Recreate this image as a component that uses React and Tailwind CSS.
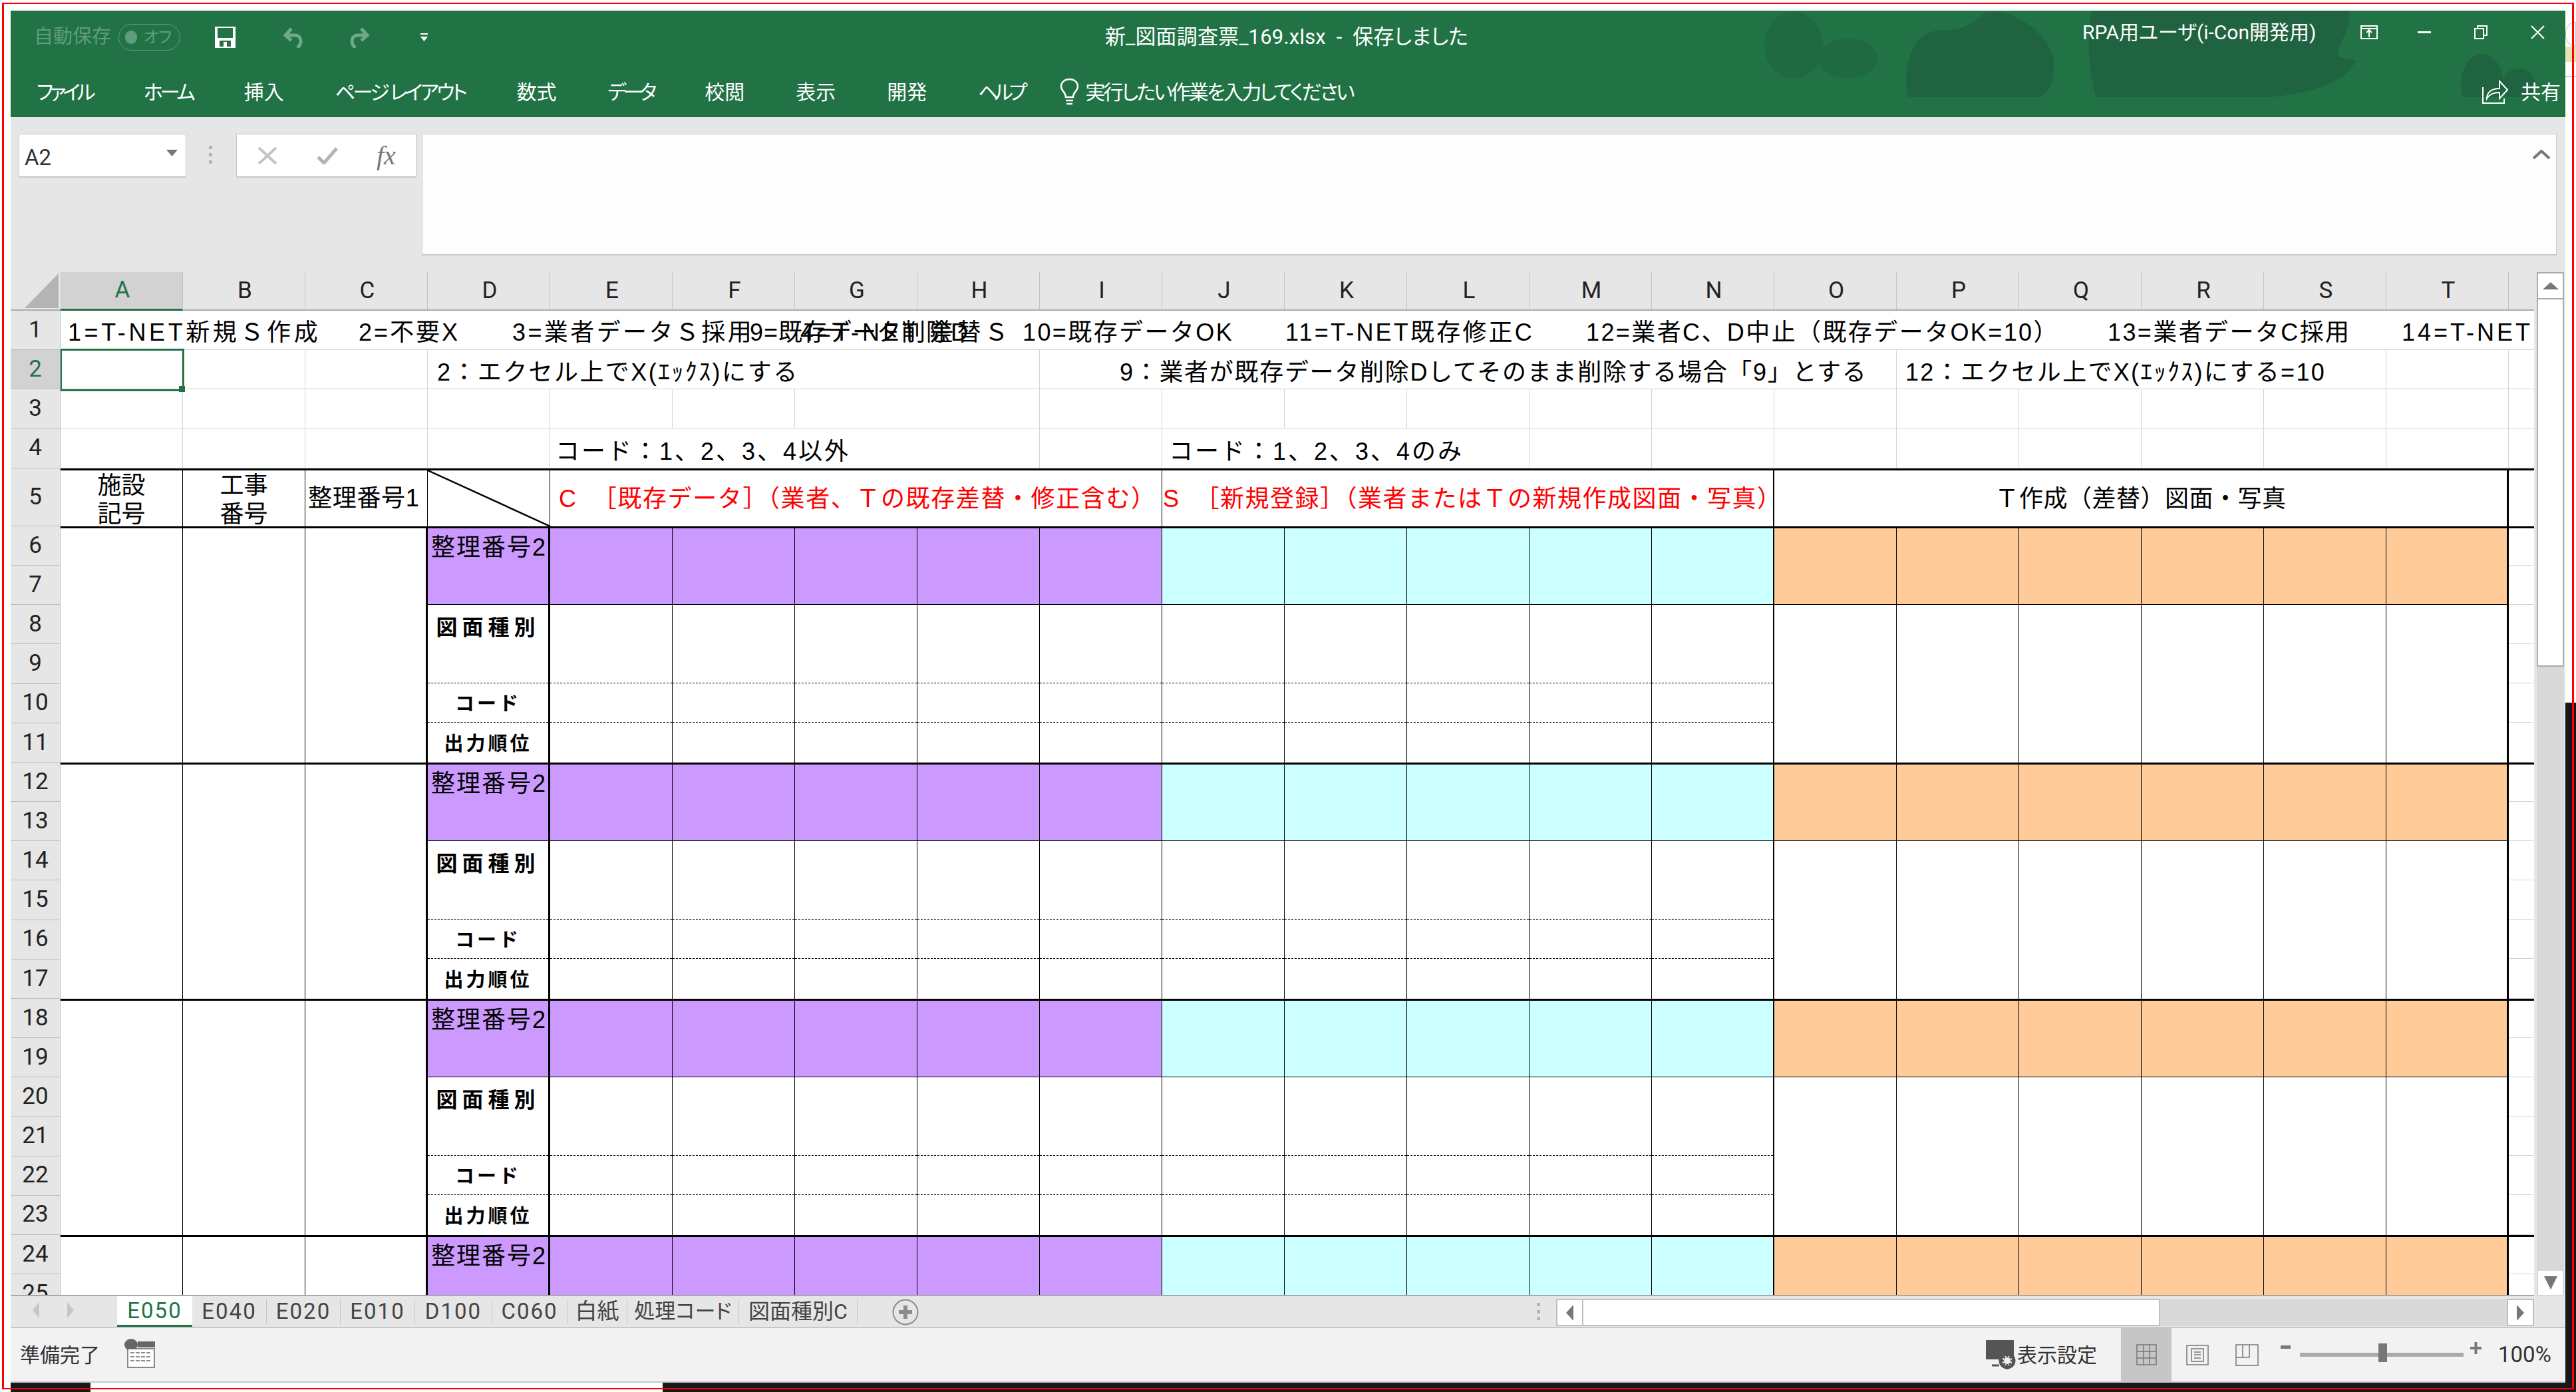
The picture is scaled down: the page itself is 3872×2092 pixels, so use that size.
import React from "react";

const COLS = "ABCDEFGHIJKLMNOPQRST".split("");
const UI_FONT = "[font-family:Roboto,'Noto_Sans_CJK_JP',sans-serif] [font-feature-settings:'palt']";
const CELL_FONT = "[font-family:'Liberation_Sans','Noto_Sans_CJK_JP',sans-serif] [font-feature-settings:normal]";

const SPAN = {
  1: "col-span-1",
  2: "col-span-2",
  3: "col-span-3",
  4: "col-span-4",
  5: "col-span-5",
  6: "col-span-6",
  7: "col-span-7",
};

const GRID_ROW = "grid grid-cols-[repeat(20,184px)_37px] border-b border-[#d4d4d4]";

// [span, text, padding, vertical line]
const ROW_1 = [
  [2, "1=T-NET新規Ｓ作成", "pl-[11px] tracking-[4.6px]"],
  [1, "2=不要X", "pl-[80px] tracking-[3px]"],
  [2, "3=業者データＳ採用", "pl-[127px] tracking-[3.4px]"],
  [1, "9=既存データ削除D", "pl-[116px] tracking-[1px]"],
  [1, "4=T-NET 差替Ｓ", "pl-[8px] tracking-[5px]"],
  [2, "10=既存データOK", "pl-[158px] tracking-[2.4px]"],
  [1, "", ""],
  [2, "11=T-NET既存修正C", "pl-[1px] tracking-[3.2px]"],
  [4, "12=業者C、D中止（既存データOK=10）", "pl-[85px] tracking-[2.4px]"],
  [3, "13=業者データC採用", "pl-[133px] tracking-[2.4px]"],
  [1, "14=T-NET", "pl-[23px] tracking-[4px]"],
  [1, "", ""],
];
const ROW_2 = [
  [1, "", "", true],
  [1, "", "", true],
  [1, "", "", true],
  [5, "2：エクセル上でX(ｴｯｸｽ)にする", "pl-[14px] tracking-[2.4px]", true],
  [7, "9：業者が既存データ削除Dしてそのまま削除する場合「9」とする", "pl-[120px] tracking-[1.7px]", true],
  [4, "12：エクセル上でX(ｴｯｸｽ)にする=10", "pl-[13px] tracking-[2.3px]", true],
  [1, "", "", true],
  [1, "", ""],
];
const ROW_3 = [
  ...Array.from({ length: 6 }, () => [1, "", "", true]),
  [2, "", "", true],
  ...Array.from({ length: 12 }, () => [1, "", "", true]),
  [1, "", ""],
];
const ROW_4 = [
  ...Array.from({ length: 4 }, () => [1, "", "", true]),
  [4, "コード：1、2、3、4以外", "pl-[8px] tracking-[3px]", true],
  [1, "", "", true],
  [3, "コード：1、2、3、4のみ", "pl-[10px] tracking-[3px]", true],
  ...Array.from({ length: 8 }, () => [1, "", "", true]),
  [1, "", ""],
];

const TABS = [
  ["E040", "w-[112px] text-[33px] tracking-[2px]"],
  ["E020", "w-[111px] text-[33px] tracking-[2px]"],
  ["E010", "w-[112px] text-[33px] tracking-[2px]"],
  ["D100", "w-[116px] text-[33px] tracking-[2px]"],
  ["C060", "w-[113px] text-[33px] tracking-[2px]"],
  ["白紙", "w-[90px] text-[33px]"],
  ["処理コード", "w-[168px] text-[31px]"],
  ["図面種別C", "w-[178px] text-[32px]"],
];

const RIBBON_TABS = [
  ["ファイル", "tracking-[-5px]"],
  ["ホーム", "tracking-[-4px]"],
  ["挿入", "tracking-normal"],
  ["ページ レイアウト", "tracking-[-3.5px]"],
  ["数式", "tracking-normal"],
  ["データ", "tracking-[-5px]"],
  ["校閲", "tracking-normal"],
  ["表示", "tracking-normal"],
  ["開発", "tracking-normal"],
  ["ヘルプ", "tracking-[-6px]"],
];

function TextRow({ cells, height, pad }) {
  return (
    <div className={`${GRID_ROW} ${height}`}>
      {cells.map((c, i) => (
        <div
          key={i}
          className={`${SPAN[c[0]]} ${c[3] ? "border-r border-[#d4d4d4]" : ""} flex items-end whitespace-nowrap text-[36px] leading-[44px] text-black ${pad} ${CELL_FONT} ${c[2]}`}
        >
          {c[1]}
        </div>
      ))}
    </div>
  );
}

function Ribbon() {
  return (
    <div className={`relative h-[160px] bg-[#217346] ${UI_FONT}`}>
      {/* title bar background art */}
      <svg className="absolute left-0 top-0 pointer-events-none" width="3840" height="130" viewBox="0 0 3840 130">
        <ellipse cx="2680" cy="52" rx="44" ry="50" fill="#1f6a42" />
        <ellipse cx="2762" cy="72" rx="44" ry="30" fill="#1f6a42" />
        <path d="M2852 130C2845 100 2850 30 2900 30C2925 30 2945 25 2965 5C3000 -10 3060 30 3070 70C3075 110 3060 125 3050 130Z" fill="#1f6340" />
        <path d="M3127 0H3515C3520 30 3490 60 3500 70L3525 75C3510 110 3450 125 3395 130H3135C3125 100 3120 60 3127 0Z" fill="#1f6340" />
        <ellipse cx="3715" cy="110" rx="32" ry="45" fill="#1f6340" />
        <ellipse cx="3770" cy="112" rx="25" ry="25" fill="#1f6340" />
      </svg>
      <div className="relative flex h-[80px] items-center pl-[35px]">
        <span className="w-[119px] text-[29px] text-[#5f9d7e]">自動保存</span>
        <span className="ml-[8px] flex h-[40px] w-[93px] items-center gap-[10px] rounded-full border border-[#5f9d7e] pl-[9px] text-[24px] text-[#5f9d7e]">
          <span className="h-[20px] w-[18px] rounded-full bg-[#5f9d7e]" />
          オフ
        </span>
        <svg className="ml-[52px]" width="31" height="32" viewBox="0 0 31 32">
          <path d="M0 0H31V32H0Z M4 2V17H27V2Z M7 21V30H24V21Z" fill="#fff" fillRule="evenodd" />
          <rect x="13" y="23" width="5" height="7" fill="#fff" />
        </svg>
        <svg className="ml-[71px]" width="32" height="32" viewBox="0 0 32 32" fill="none" stroke="#6fa88b" strokeWidth="5">
          <path d="M5 13H18C25 13 27 18 27 22C27 26 25 29 22 32" />
          <path d="M13 3L4 13L13 21" />
        </svg>
        <svg className="ml-[67px]" width="32" height="32" viewBox="0 0 32 32" fill="none" stroke="#6fa88b" strokeWidth="5">
          <path d="M27 13H14C7 13 5 18 5 22C5 26 7 29 10 32" />
          <path d="M19 3L28 13L19 21" />
        </svg>
        <svg className="ml-[75px]" width="13" height="12" viewBox="0 0 13 12">
          <rect x="1" y="0" width="11" height="2" fill="#fff" />
          <path d="M1 5H12L6.5 12Z" fill="#fff" />
        </svg>
        <span className="ml-[1017px] whitespace-pre text-[31px] tracking-[0.2px] text-white">新_図面調査票_169.xlsx  -  保存しました</span>
        <span className="ml-[923px] -mt-[16px] whitespace-nowrap text-[30px] text-white">RPA用ユーザ(i-Con開発用)</span>
        <svg className="ml-[67px] -mt-[16px]" width="26" height="21" viewBox="0 0 26 21" fill="none" stroke="#fff" strokeWidth="2">
          <rect x="1" y="1" width="24" height="19" />
          <path d="M1 5H25 M13 18V8 M9 11L13 7L17 11" />
        </svg>
        <div className="ml-[60px] -mt-[16px] h-[3px] w-[20px] bg-white" />
        <svg className="ml-[65px] -mt-[16px]" width="20" height="21" viewBox="0 0 20 21" fill="none" stroke="#fff" strokeWidth="2">
          <rect x="1" y="5" width="13" height="15" />
          <path d="M5 5V1H19V15H14" />
        </svg>
        <svg className="ml-[65px] -mt-[16px]" width="21" height="21" viewBox="0 0 21 21" stroke="#fff" strokeWidth="2">
          <path d="M1 1L20 20 M20 1L1 20" />
        </svg>
      </div>
      <div className="relative flex h-[80px] items-center pl-[39px] pr-[7px] pt-[4px]">
        <div className="flex gap-[77px] text-[30px] text-white">
          {RIBBON_TABS.map(([t, track]) => (
            <span key={t} className={`whitespace-nowrap ${track}`}>
              {t}
            </span>
          ))}
        </div>
        <svg className="ml-[55px] shrink-0" width="29" height="40" viewBox="0 0 29 40" fill="none" stroke="#fff" strokeWidth="2.5">
          <path d="M9 28C9 20 2 19 2 12C2 5 8 1 14.5 1C21 1 27 5 27 12C27 19 20 20 20 28Z" />
          <path d="M9 33H20 M10 38H19" />
        </svg>
        <span className="ml-[9px] whitespace-nowrap text-[30px] tracking-[-2.8px] text-white">実行したい作業を入力してください</span>
        <svg className="ml-auto shrink-0" width="39" height="36" viewBox="0 0 39 36" fill="none" stroke="#fff" strokeWidth="2">
          <path d="M1 11V35H33V28" />
          <path d="M7 28C7 18 15 13 26 13V2L38 15L26 28V19C18 19 11 21 7 28Z" />
        </svg>
        <span className="ml-[19px] shrink-0 whitespace-nowrap text-[30px] text-white">共有</span>
      </div>
    </div>
  );
}

function FormulaBar() {
  return (
    <div className={`flex h-[233px] items-start bg-[#e6e6e6] pl-[12px] pt-[25px] ${UI_FONT}`}>
      <div className="flex h-[66px] w-[252px] items-center justify-between border-b-2 border-l border-r border-t border-[#c8c8c8] bg-white pl-[8px] pr-[12px]">
        <span className="mt-[6px] text-[33px] text-[#333]">A2</span>
        <svg className="-mt-[8px]" width="17" height="10" viewBox="0 0 17 10">
          <path d="M0 0H17L8.5 10Z" fill="#777" />
        </svg>
      </div>
      <div className="ml-[34px] mt-[18px] flex h-[27px] w-[5px] flex-col justify-between">
        <span className="h-[5px] bg-[#b4b4b4]" />
        <span className="h-[5px] bg-[#b4b4b4]" />
        <span className="h-[5px] bg-[#b4b4b4]" />
      </div>
      <div className="ml-[36px] flex h-[66px] w-[271px] items-center border-b-2 border-l border-r border-t border-[#c8c8c8] bg-white pl-[31px]">
        <svg width="30" height="26" viewBox="0 0 30 26" stroke="#c4c4c4" strokeWidth="4">
          <path d="M2 1L28 25 M28 1L2 25" />
        </svg>
        <svg className="ml-[59px]" width="32" height="26" viewBox="0 0 32 26" fill="none" stroke="#b4b4b4" strokeWidth="5">
          <path d="M2 15L11 24L30 2" />
        </svg>
        <span className="ml-[58px] text-[40px] italic leading-none text-[#777] [font-family:'Liberation_Serif',serif]">fx</span>
      </div>
      <div className="relative ml-[8px] h-[183px] w-[3209px] border-b-2 border-l border-r border-t border-[#c8c8c8] bg-[#fdfdfd]">
        <svg className="absolute right-[9px] top-[23px]" width="26" height="14" viewBox="0 0 26 14" fill="none" stroke="#777" strokeWidth="4">
          <path d="M1 13L13 2L25 13" />
        </svg>
      </div>
    </div>
  );
}

function Section() {
  const solid = "border-b border-black";
  const dashed = "border-b border-dashed border-black";
  const label = "flex justify-center font-bold text-black";
  return (
    <div className={`flex h-[355px] shrink-0 border-t-[3px] border-black ${CELL_FONT}`}>
      <div className="w-[184px] border-r border-black" />
      <div className="w-[184px] border-r border-black" />
      <div className="w-[184px] border-r-[3px] border-black" />
      <div className="flex w-[184px] flex-col border-r-[3px] border-black">
        <div className={`h-[115px] bg-[#cc99ff] pl-[5px] pt-[9px] text-[36px] leading-[40px] tracking-[2px] whitespace-nowrap ${solid}`}>整理番号2</div>
        <div className={`${label} h-[118px] pt-[12px] text-[32px] leading-[44px] tracking-[7px] ${dashed}`}>図面種別</div>
        <div className={`${label} h-[59px] pt-[11px] text-[29px] leading-[40px] tracking-[4px] ${dashed}`}>コード</div>
        <div className={`${label} h-[60px] pt-[12px] text-[29px] leading-[40px] tracking-[4px]`}>出力順位</div>
      </div>
      {["E", "F", "G", "H", "I"].map((c) => (
        <div key={c} className="flex w-[184px] flex-col border-r border-black">
          <div className={`h-[115px] bg-[#cc99ff] ${solid}`} />
          <div className={`h-[118px] ${dashed}`} />
          <div className={`h-[59px] ${dashed}`} />
          <div className="h-[60px]" />
        </div>
      ))}
      {["J", "K", "L", "M", "N"].map((c) => (
        <div key={c} className={`flex w-[184px] flex-col border-black ${c === "N" ? "border-r-2" : "border-r"}`}>
          <div className={`h-[115px] bg-[#ccffff] ${solid}`} />
          <div className={`h-[118px] ${dashed}`} />
          <div className={`h-[59px] ${dashed}`} />
          <div className="h-[60px]" />
        </div>
      ))}
      {["O", "P", "Q", "R", "S", "T"].map((c) => (
        <div key={c} className={`flex w-[184px] flex-col border-black ${c === "T" ? "border-r-[3px]" : "border-r"}`}>
          <div className={`h-[115px] bg-[#ffcc99] ${solid}`} />
        </div>
      ))}
      <div className="flex w-[37px] flex-col">
        <div className="h-[56px] border-b border-[#d4d4d4]" />
        <div className="h-[59px] border-b border-[#d4d4d4]" />
        <div className="h-[59px] border-b border-[#d4d4d4]" />
        <div className="h-[59px] border-b border-[#d4d4d4]" />
        <div className="h-[59px] border-b border-[#d4d4d4]" />
        <div className="h-[60px] border-b border-[#d4d4d4]" />
      </div>
    </div>
  );
}

function Sheet() {
  const rowHead = "flex items-center justify-center border-b border-r border-[#bdbdbd] text-[35px] text-[#222]";
  const tall = Array.from({ length: 20 }, (_, i) => i + 6);
  return (
    <div className={`flex h-[1539px] bg-[#e6e6e6] ${UI_FONT}`}>
      <div className="relative flex h-full w-[3793px] flex-col overflow-hidden border-b-2 border-[#a8a8a8]">
        {/* column letters */}
        <div className="flex h-[58px] shrink-0 border-b-2 border-[#ababab]">
          <div className="flex w-[75px] items-end justify-end pb-[2px] pr-[2px]">
            <svg width="52" height="52" viewBox="0 0 52 52">
              <path d="M51 0V52H0Z" fill="#b4b4b4" />
            </svg>
          </div>
          {COLS.map((c) => (
            <div
              key={c}
              className={`flex w-[184px] items-center justify-center border-r border-[#c4c4c4] pl-[3px] text-[35px] ${c === "A" ? "-mb-[2px] border-b-[3px] border-b-[#217346] bg-[#d2d2d2] text-[#217346]" : "text-[#222]"}`}
            >
              {c}
            </div>
          ))}
        </div>
        <div className="relative flex min-h-0 flex-1">
          {/* row numbers */}
          <div className="flex w-[75px] shrink-0 flex-col">
            <div className={`${rowHead} h-[59px] shrink-0`}>1</div>
            <div className={`${rowHead} h-[59px] shrink-0 bg-[#d2d2d2] text-[#217346]`}>2</div>
            <div className={`${rowHead} h-[59px] shrink-0`}>3</div>
            <div className={`${rowHead} h-[60px] shrink-0`}>4</div>
            <div className={`${rowHead} h-[87px] shrink-0`}>5</div>
            {tall.map((n) => (
              <div key={n} className={`${rowHead} h-[59.17px] shrink-0`}>
                {n}
              </div>
            ))}
          </div>
          {/* cells */}
          <div className="relative flex-1 overflow-hidden bg-white">
            <TextRow cells={ROW_1} height="h-[59px]" pad="pb-[3px]" />
            <TextRow cells={ROW_2} height="h-[59px]" pad="pb-[2px]" />
            <TextRow cells={ROW_3} height="h-[59px]" pad="pb-[3px]" />
            <TextRow cells={ROW_4} height="h-[60px]" pad="pb-[2px]" />
            <div className={`flex h-[87px] border-t-[3px] border-black text-[36px] text-black ${CELL_FONT}`}>
              <div className="flex w-[184px] flex-col items-center justify-center border-r border-black pt-[4px] leading-[43px]">
                <span>施設</span>
                <span>記号</span>
              </div>
              <div className="flex w-[184px] flex-col items-center justify-center border-r border-black pt-[4px] leading-[43px]">
                <span>工事</span>
                <span>番号</span>
              </div>
              <div className="flex w-[184px] items-center whitespace-nowrap border-r border-black pl-[4px] tracking-[0.7px]">整理番号1</div>
              <div className="relative w-[184px] border-r border-black">
                <svg className="absolute inset-0" width="184" height="84" viewBox="0 0 184 84">
                  <path d="M0 0L184 84" stroke="#000" strokeWidth="2.5" />
                </svg>
              </div>
              <div className="flex w-[920px] items-center whitespace-pre border-r border-black pl-[13px] pt-[1px] tracking-[1.6px] text-[#ff0000]">
                C  ［既存データ］（業者、Ｔの既存差替・修正含む）
              </div>
              <div className="flex w-[920px] items-center whitespace-pre border-r-2 border-black pl-[1px] pt-[1px] tracking-[1.5px] text-[#ff0000]">
                S  ［新規登録］（業者またはＴの新規作成図面・写真）
              </div>
              <div className="flex w-[1104px] items-center justify-center whitespace-nowrap border-r-[3px] border-black pt-[1px] tracking-[0.5px]">
                Ｔ作成（差替）図面・写真
              </div>
              <div className="w-[37px]" />
            </div>
            <Section />
            <Section />
            <Section />
            <Section />
            {/* selected cell A2 */}
            <div className="absolute left-[-1px] top-[57px] h-[64px] w-[187px] border-[3px] border-[#217346]">
              <div className="absolute -bottom-[4px] -right-[4px] h-[9px] w-[9px] bg-[#217346]" />
            </div>
          </div>
        </div>
      </div>
      {/* vertical scrollbar */}
      <div className="ml-[4px] flex h-full w-[41px] flex-col bg-[#d9d9d9]">
        <div className="flex h-[41px] shrink-0 items-center justify-center border-2 border-[#ababab] bg-white">
          <svg width="24" height="11" viewBox="0 0 24 11">
            <path d="M0 11L12 0L24 11Z" fill="#777" />
          </svg>
        </div>
        <div className="h-[552px] shrink-0 border-2 border-t-0 border-[#ababab] bg-white" />
        <div className="flex-1" />
        <div className="flex h-[40px] shrink-0 items-center justify-center border-2 border-[#d9d9d9] bg-white">
          <svg width="20" height="20" viewBox="0 0 20 20">
            <path d="M0 0H20L10 20Z" fill="#777" />
          </svg>
        </div>
      </div>
    </div>
  );
}

function TabBar() {
  return (
    <div className={`flex h-[48px] border-b-2 border-[#c8c8c8] bg-[#e6e6e6] ${UI_FONT}`}>
      <div className="flex w-[160px] items-center gap-[42px] pb-[4px] pl-[33px]">
        <svg width="10" height="24" viewBox="0 0 10 24">
          <path d="M10 0V24L0 12Z" fill="#c6c6c6" />
        </svg>
        <svg width="10" height="24" viewBox="0 0 10 24">
          <path d="M0 0V24L10 12Z" fill="#c6c6c6" />
        </svg>
      </div>
      <div className="flex h-[46px] w-[113px] items-center justify-center border-b-[3px] border-[#217346] bg-white text-[33px] tracking-[2px] text-[#217346]">E050</div>
      {TABS.map(([t, w]) => (
        <div key={t} className={`my-[4px] flex h-[38px] items-center justify-center whitespace-nowrap border-r border-[#c6c6c6] text-[#444] ${w}`}>
          {t}
        </div>
      ))}
      <svg className="ml-[52px] mt-[4px]" width="40" height="40" viewBox="0 0 40 40" fill="none">
        <circle cx="20" cy="20" r="18.5" stroke="#8c8c8c" strokeWidth="2" />
        <path d="M10 20H30 M20 10V30" stroke="#8c8c8c" strokeWidth="6" />
      </svg>
      <div className="ml-[929px] mt-[10px] flex h-[26px] w-[5px] flex-col justify-between">
        <span className="h-[5px] bg-[#b4b4b4]" />
        <span className="h-[5px] bg-[#b4b4b4]" />
        <span className="h-[5px] bg-[#b4b4b4]" />
      </div>
      <div className="ml-[24px] mt-[4px] flex h-[41px] w-[1470px] bg-[#d9d9d9]">
        <div className="flex w-[41px] items-center justify-center border-2 border-[#c0c0c0] bg-white">
          <svg width="11" height="24" viewBox="0 0 11 24">
            <path d="M11 0V24L0 12Z" fill="#777" />
          </svg>
        </div>
        <div className="w-[867px] border-2 border-l-0 border-[#c0c0c0] bg-white" />
        <div className="flex-1" />
        <div className="flex w-[41px] items-center justify-center border-2 border-[#c0c0c0] bg-white">
          <svg width="11" height="24" viewBox="0 0 11 24">
            <path d="M0 0V24L11 12Z" fill="#777" />
          </svg>
        </div>
      </div>
    </div>
  );
}

function StatusBar() {
  return (
    <div className={`flex h-[80px] items-center bg-[#f2f2f2] ${UI_FONT}`}>
      <span className="ml-[14px] text-[30px] text-[#333]">準備完了</span>
      <svg className="ml-[37px] -mt-[4px]" width="46" height="44" viewBox="0 0 46 44">
        <ellipse cx="10" cy="9" rx="10" ry="9" fill="#666" />
        <rect x="20" y="4" width="26" height="9" fill="#666" />
        <rect x="5" y="15" width="40" height="28" fill="#fff" stroke="#666" strokeWidth="1.5" />
        <path d="M9 21H41 M9 27H41 M9 33H41" stroke="#666" strokeWidth="1.5" strokeDasharray="6 2" />
      </svg>
      <svg className="ml-[2752px]" width="46" height="44" viewBox="0 0 46 44">
        <rect x="0" y="0" width="42" height="29" rx="1" fill="#555" />
        <circle cx="32" cy="31" r="10" fill="#f2f2f2" stroke="#555" strokeWidth="5" />
        <path d="M32 18V44 M20 31H44 M24 22L40 40 M40 22L24 40" stroke="#555" strokeWidth="3" />
        <circle cx="32" cy="31" r="5" fill="#f2f2f2" />
        <path d="M9 38H20" stroke="#555" strokeWidth="3" />
      </svg>
      <span className="ml-[1px] whitespace-nowrap text-[30px] text-[#333]">表示設定</span>
      <div className="ml-[36px] flex h-full w-[76px] items-center justify-center bg-[#c6c6c6]">
        <svg width="31" height="32" viewBox="0 0 31 32" fill="none" stroke="#777" strokeWidth="1.5">
          <rect x="1" y="1" width="29" height="30" />
          <path d="M1 11H30 M1 21H30 M11 1V31 M20 1V31" />
        </svg>
      </div>
      <svg className="ml-[22px]" width="34" height="31" viewBox="0 0 34 31" fill="none" stroke="#777" strokeWidth="1.5">
        <rect x="1" y="1" width="32" height="29" />
        <rect x="8" y="6" width="18" height="19" />
        <path d="M12 11H22 M12 15H22 M12 20H22" />
      </svg>
      <svg className="ml-[40px]" width="35" height="33" viewBox="0 0 35 33" fill="none" stroke="#777" strokeWidth="1.5">
        <rect x="1" y="1" width="33" height="31" />
        <path d="M1 20H21V1 M11 1V20" />
      </svg>
      <div className="ml-[33px] -mt-[24px] h-[5px] w-[15px] bg-[#777]" />
      <div className="relative ml-[14px] h-[6px] w-[246px] bg-[#aaa]">
        <div className="absolute left-[118px] top-[-14px] h-[28px] w-[13px] bg-[#777]" />
      </div>
      <svg className="ml-[10px] -mt-[20px]" width="17" height="18" viewBox="0 0 17 18">
        <path d="M0 9H17 M8.5 0V18" stroke="#777" strokeWidth="4" />
      </svg>
      <span className="ml-[25px] text-[33px] text-[#333]">100%</span>
    </div>
  );
}

export default function App() {
  return (
    <div className="relative flex h-[2092px] w-[3872px] overflow-hidden bg-white">
      <div className="w-[16px] shrink-0" />
      <div className="flex w-[3840px] shrink-0 flex-col">
        <div className="h-[16px]" />
        <Ribbon />
        <FormulaBar />
        <Sheet />
        <TabBar />
        <StatusBar />
        <div className="flex h-[16px] border-t-2 border-[#c8c8c8] bg-white">
          <div className="w-[120px] bg-[#17181a]" />
          <div className="w-[860px]" />
          <div className="flex-1 bg-[#17181a]" />
        </div>
      </div>
      <div className="flex flex-1 flex-col">
        <div className="h-[33px]" />
        <div className="h-[37px] w-[16px] rounded-l-full border border-[#c4c4c4]" />
        <div className="h-[23px] bg-[#e9e2b4]" />
        <div className="h-[22px] border-b border-[#999] bg-white" />
        <div className="flex-1" />
        <div className="h-[1036px] bg-[#17181a]" />
      </div>
      {/* red frame drawn on the capture */}
      <div className="pointer-events-none absolute left-[3px] top-[4px] h-[2084px] w-[3866px] border-x-[3px] border-y-2 border-[#ff0000]" />
    </div>
  );
}
